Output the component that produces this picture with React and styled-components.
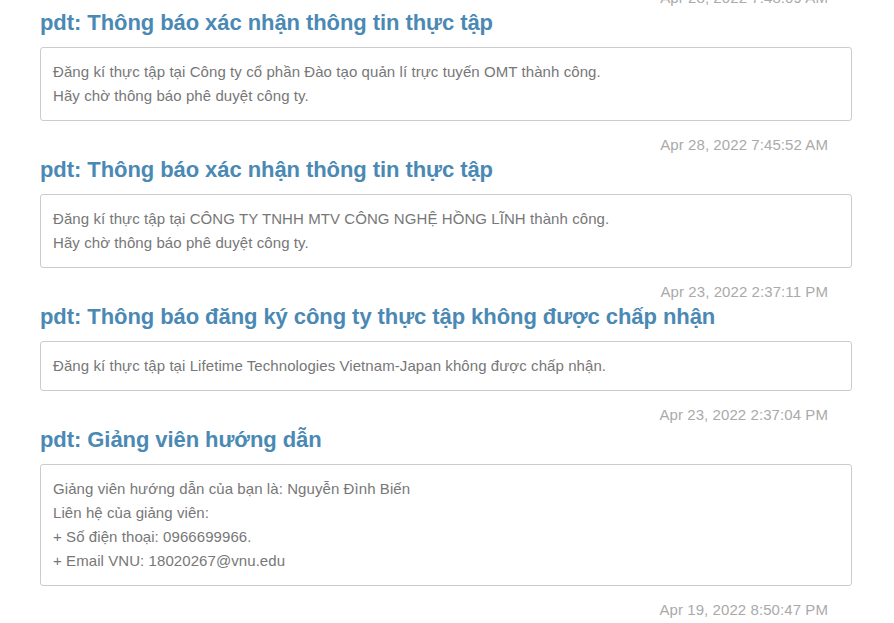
import styled, { createGlobalStyle } from 'styled-components';

const GlobalStyle = createGlobalStyle`
  body {
    margin: 0;
    background: #fff;
    font-family: "Liberation Sans", Arial, sans-serif;
    overflow: hidden;
  }
`;

const Page = styled.main`
  padding: 0 42px 0 40px;
  margin-top: -26px;
`;

const Item = styled.article`
  display: flex;
  flex-direction: column;
`;

const Time = styled.div`
  margin-top: 14px;
  padding-right: 24px;
  text-align: right;
  font-size: 15px;
  line-height: 20px;
  letter-spacing: 0.08px;
  color: #aaa;
`;

const Title = styled.h3`
  margin: 2px 0 11px;
  font-size: 22px;
  line-height: 26px;
  letter-spacing: -0.07px;
  font-weight: bold;
  color: #4a89b4;
`;

const Body = styled.div`
  border: 1px solid #ccc;
  border-radius: 3px;
  padding: 12px 12px;
  font-size: 15px;
  line-height: 24px;
  letter-spacing: 0.075px;
  color: #777;

  p {
    margin: 0;
  }
`;

const notices = [
  {
    time: 'Apr 28, 2022 7:48:09 AM',
    title: 'pdt: Thông báo xác nhận thông tin thực tập',
    lines: [
      'Đăng kí thực tập tại Công ty cổ phần Đào tạo quản lí trực tuyến OMT thành công.',
      'Hãy chờ thông báo phê duyệt công ty.',
    ],
  },
  {
    time: 'Apr 28, 2022 7:45:52 AM',
    title: 'pdt: Thông báo xác nhận thông tin thực tập',
    lines: [
      'Đăng kí thực tập tại CÔNG TY TNHH MTV CÔNG NGHỆ HỒNG LĨNH thành công.',
      'Hãy chờ thông báo phê duyệt công ty.',
    ],
  },
  {
    time: 'Apr 23, 2022 2:37:11 PM',
    title: 'pdt: Thông báo đăng ký công ty thực tập không được chấp nhận',
    lines: [
      'Đăng kí thực tập tại Lifetime Technologies Vietnam-Japan không được chấp nhận.',
    ],
  },
  {
    time: 'Apr 23, 2022 2:37:04 PM',
    title: 'pdt: Giảng viên hướng dẫn',
    lines: [
      'Giảng viên hướng dẫn của bạn là: Nguyễn Đình Biến',
      'Liên hệ của giảng viên:',
      '+ Số điện thoại: 0966699966.',
      '+ Email VNU: 18020267@vnu.edu',
    ],
  },
  {
    time: 'Apr 19, 2022 8:50:47 PM',
    title: 'pdt: Thông báo xác nhận thông tin thực tập',
    lines: ['Đăng kí thực tập thành công.'],
  },
];

export default function App() {
  return (
    <>
      <GlobalStyle />
      <Page>
        {notices.map((n) => (
          <Item key={n.time}>
            <Time>{n.time}</Time>
            <Title>{n.title}</Title>
            <Body>
              {n.lines.map((l) => (
                <p key={l}>{l}</p>
              ))}
            </Body>
          </Item>
        ))}
      </Page>
    </>
  );
}
